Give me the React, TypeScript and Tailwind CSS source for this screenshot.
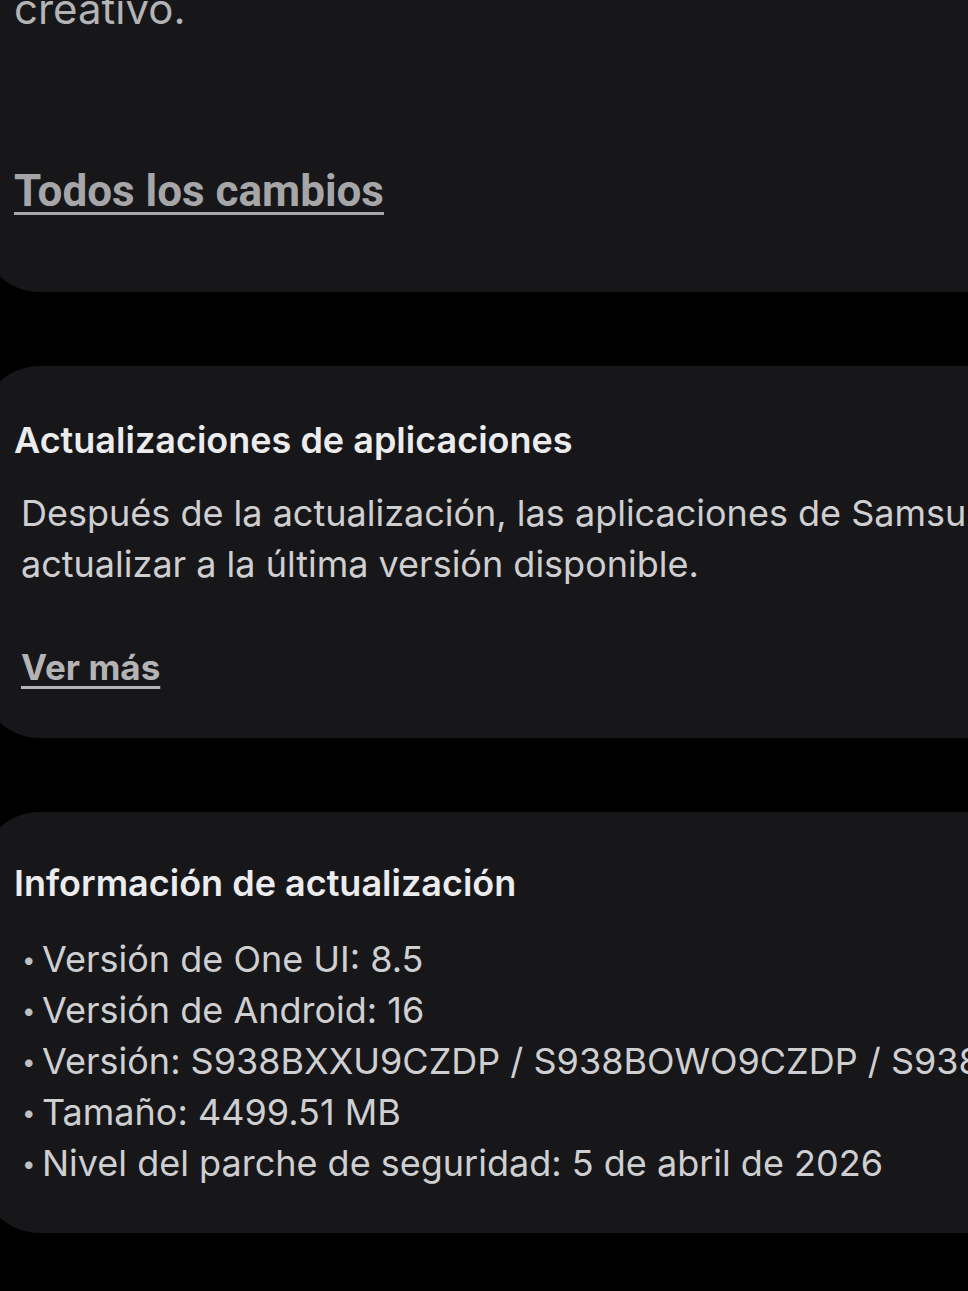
const items = [
  "Versión de One UI: 8.5",
  "Versión de Android: 16",
  "Versión: S938BXXU9CZDP / S938BOWO9CZDP / S938BXXU9CZDP",
  "Tamaño: 4499.51 MB",
  "Nivel del parche de seguridad: 5 de abril de 2026",
];

const App = () => {
  return (
    <div className="h-[1291px] w-full overflow-hidden bg-black font-['Inter',sans-serif]">
      <div className="-ml-[20px] flex w-[1100px] flex-col gap-[74px]">
        {/* previous card, top cut off */}
        <section className="-mt-[21px] h-[313px] rounded-b-[60px] bg-[#17171a] pl-[34px]">
          <p className="whitespace-nowrap text-[42px] leading-[60px] text-[#b4b4b6]">
            creativo.
          </p>
          <a className="mt-[127px] inline-block font-['Roboto',sans-serif] text-[44px] font-bold leading-[50px] text-[#a6a6a8] underline decoration-[3px] underline-offset-[6px]">
            Todos los cambios
          </a>
        </section>

        <section className="h-[372px] rounded-[60px] bg-[#17171a] pl-[34px] pt-[52px]">
          <h2 className="whitespace-nowrap text-[36px] font-semibold leading-[44px] text-[#ececee]">
            Actualizaciones de aplicaciones
          </h2>
          <p className="mt-[26px] whitespace-nowrap pl-[7px] text-[36px] leading-[51px] text-[#cfcfd1]">
            Después de la actualización, las aplicaciones de Samsung se pueden
            <br />
            actualizar a la última versión disponible.
          </p>
          <a className="ml-[7px] mt-[57px] inline-block text-[35px] font-bold leading-[40px] text-[#b4b4b6] underline decoration-[3px] underline-offset-[6px]">
            Ver más
          </a>
        </section>

        <section className="h-[421px] rounded-[60px] bg-[#17171a] pl-[34px] pt-[49px]">
          <h2 className="whitespace-nowrap text-[36px] font-semibold leading-[44px] text-[#ececee]">
            Información de actualización
          </h2>
          <ul className="mt-[29px] pl-[8px]">
            {items.map((t) => (
              <li
                key={t}
                className="flex whitespace-nowrap text-[36px] leading-[51px] text-[#cfcfd1]"
              >
                <span className="w-[20px] shrink-0 text-[24px] text-[#c0c0c2]">•</span>
                <span>{t}</span>
              </li>
            ))}
          </ul>
        </section>
      </div>
    </div>
  );
};

export default App;
